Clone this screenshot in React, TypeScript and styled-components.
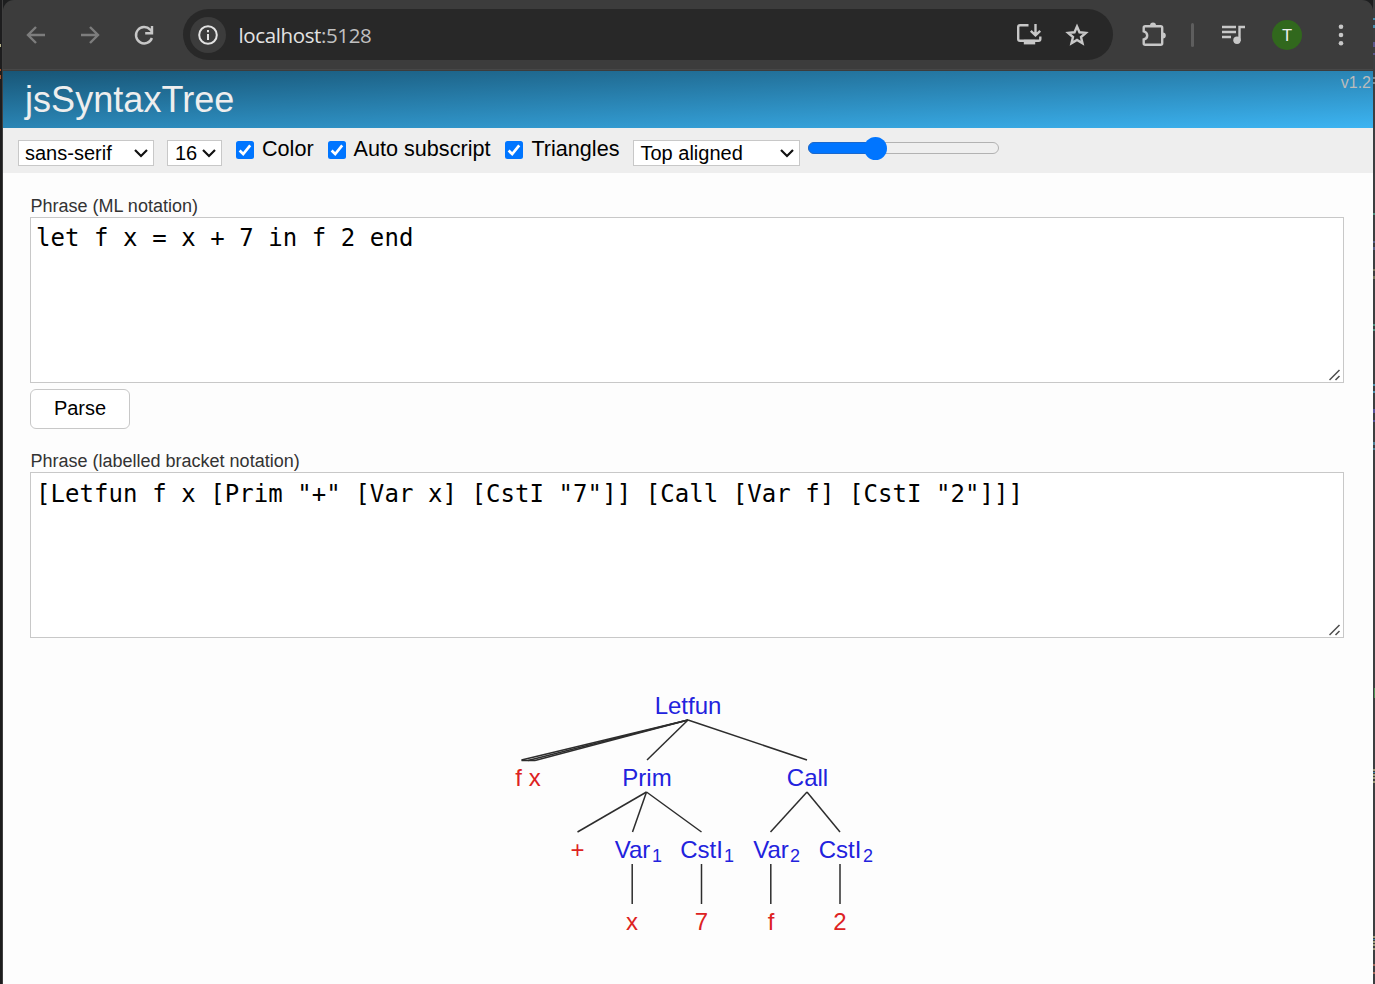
import React from 'react';
import styled, { createGlobalStyle } from 'styled-components';

const Global = createGlobalStyle`
  body { margin: 0; background: #1e1f21; overflow: hidden; }
  * { box-sizing: border-box; }
`;

const Desktop = styled.div`
  display: flex;
  height: 984px;
  width: 1375px;
  font-family: 'Liberation Sans', Arial, sans-serif;
  background: #1d1e1f;
`;

const LeftEdge = styled.div`
  width: 3px;
  border-right: 1px solid #3f3f3f;
  background:
    linear-gradient(#b9b58c, #b9b58c) 0 44px / 1px 3px no-repeat,
    linear-gradient(#a8532b, #a8532b) 0 69px / 1px 2px no-repeat,
    linear-gradient(#a8532b, #a8532b) 0 75px / 1px 4px no-repeat,
    #1d1d1e;
`;

const speck = (color: string, y: number, h: number) =>
  `linear-gradient(${color}, ${color}) 0 ${y}px / 2px ${h}px no-repeat`;

const RightEdge = styled.div`
  width: 2px;
  background: ${[
    speck('#4a8fae', 18, 2), speck('#4a8fae', 25, 3),
    speck('#5b578c', 42, 5), speck('#5b578c', 53, 2),
    speck('#85888a', 77, 2), speck('#85888a', 82, 2),
    speck('#4e9180', 213, 2), speck('#575f86', 241, 2), speck('#575f86', 247, 3),
    speck('#77755c', 269, 2), speck('#77755c', 276, 3),
    speck('#4e9180', 324, 2), speck('#4e9180', 329, 2),
    speck('#4c92ae', 384, 2), speck('#4c92ae', 391, 2),
    speck('#57539a', 409, 4), speck('#57539a', 420, 2),
    speck('#4b7f96', 442, 3), speck('#4b7f96', 448, 2),
    'linear-gradient(#4e9155, #4e9155) 1px 688px / 1px 10px no-repeat',
    speck('#9b9a78', 769, 2), speck('#3e85a4', 772, 1), speck('#9b9a78', 774, 2), speck('#9b9a78', 777, 2), speck('#9b9a78', 781, 2),
    speck('#9b9a78', 936, 2), speck('#3e85a4', 939, 1), speck('#9b9a78', 941, 2), speck('#9b9a78', 944, 2), speck('#9b9a78', 948, 2),
    speck('#a3685b', 964, 2), speck('#a3685b', 972, 2),
  ].join(', ')}, #3d3e40;
`;

const Browser = styled.div`
  width: 1370px;
  display: flex;
  flex-direction: column;
`;

const NavBar = styled.div`
  height: 71px;
  padding: 0 19px 2px 23px;
  display: flex;
  align-items: center;
  background: linear-gradient(#474747, #474747) 0 69px / 100% 1px no-repeat, #3c3c3c;
  border-radius: 11px 11px 0 0;
`;

const NavIcon = styled.svg<{ $gap?: number; $tone?: string }>`
  width: 26px;
  height: 26px;
  flex: none;
  margin-left: ${p => p.$gap ?? 0}px;
  fill: none;
  stroke: ${p => p.$tone ?? '#c7c7c7'};
  stroke-width: 2.4;
`;

const Omnibox = styled.div`
  width: 930px;
  height: 51px;
  margin-left: 26px;
  padding: 0 23px 0 7px;
  display: flex;
  align-items: center;
  border-radius: 26px;
  background: #282828;
`;

const SiteInfo = styled.span`
  width: 36px;
  height: 36px;
  border-radius: 50%;
  background: #3c3c3c;
  display: grid;
  place-items: center;
`;

const Url = styled.span`
  flex: 1;
  margin-left: 12.5px;
  font: 20.5px/28px 'Open Sans', 'Noto Sans', sans-serif;
  color: #e3e3e3;
  letter-spacing: -0.38px;
  span { color: #c0c0c0; }
`;

const Separator = styled.span`
  width: 3px;
  height: 24px;
  margin-left: 24px;
  border-radius: 2px;
  background: #5e5e5e;
`;

const Avatar = styled.span`
  width: 30px;
  height: 30px;
  margin-left: 26px;
  border-radius: 50%;
  background: #31681d;
  color: #f0f0f0;
  font: 17px/30px Roboto, sans-serif;
  text-align: center;
`;

const Header = styled.header`
  height: 57px;
  padding: 0 2px 0 22px;
  display: flex;
  justify-content: space-between;
  background: linear-gradient(to bottom right, #185677, #3cb4f2);
`;

const Title = styled.h1`
  margin: 0;
  font-size: 36px;
  font-weight: 400;
  line-height: 58px;
  letter-spacing: 0.05px;
  color: #eee;
`;

const Version = styled.span`
  font-size: 16px;
  line-height: 24px;
  color: #bbb;
`;

const Toolbar = styled.div`
  height: 45px;
  padding-left: 15px;
  display: flex;
  align-items: flex-start;
  background: #eee;
`;

const Select = styled.div<{ $width: number; $gap?: number; $pad?: number }>`
  width: ${p => p.$width}px;
  height: 26px;
  margin: 12px 0 0 ${p => p.$gap ?? 0}px;
  padding: 0 5px 0 ${p => p.$pad ?? 6}px;
  display: flex;
  align-items: center;
  justify-content: space-between;
  border: 1px solid #c8c8c8;
  background: #fff;
  color: #000;
  font-size: 20px;
  line-height: 24px;
  white-space: nowrap;
`;

const Check = styled.label<{ $gap: number }>`
  margin: 8px 0 0 ${p => p.$gap}px;
  display: flex;
  gap: 8px;
  font-size: 21.6px;
  line-height: 26px;
  color: #000;
  svg { margin-top: 5px; }
`;

const Slider = styled.div`
  position: relative;
  width: 191px;
  height: 12px;
  margin: 14px 0 0 8px;
  border: 1px solid #b2b2b2;
  border-radius: 6px;
  background: #efefef;
`;

const SliderFill = styled.div`
  width: 66px;
  height: 12px;
  margin: -1px;
  border: 1px solid #1a68cc;
  border-radius: 6px 0 0 6px;
  background: #0075ff;
`;

const SliderThumb = styled.div`
  position: absolute;
  left: 55px;
  top: -6.5px;
  width: 23px;
  height: 23px;
  border-radius: 50%;
  background: #0075ff;
`;

const Content = styled.main`
  flex: 1;
  padding: 22px 29px 0 27px;
  background: #fdfdfd;
`;

const Label = styled.label`
  display: block;
  height: 22px;
  padding-left: 0.5px;
  font-size: 18px;
  line-height: 22px;
  color: #333;
`;

const Phrase = styled.div<{ $top?: number }>`
  height: 166px;
  padding: ${p => p.$top ?? 5}px 5px 0;
  display: flex;
  flex-direction: column;
  justify-content: space-between;
  border: 1px solid #c8c8c8;
  background: #fff;
  color: #000;
  font: 24px/31px 'DejaVu Sans Mono', monospace;
  letter-spacing: 0.067px;
  white-space: pre;
`;

const Grip = styled.svg`
  align-self: flex-end;
  width: 12px;
  height: 12px;
  margin: 0 -3px 1px 0;
  stroke: #4c4c4c;
  stroke-width: 1.5;
`;

const ParseButton = styled.button`
  display: block;
  width: 100px;
  height: 40px;
  margin: 6px 0 21px;
  padding: 0 0 2px;
  border: 1px solid #c8c8c8;
  border-radius: 6px;
  background: #fff;
  color: #000;
  font: 20px 'Liberation Sans', Arial, sans-serif;
`;

const Tree = styled.svg`
  display: block;
  width: 400px;
  height: 260px;
  margin: 42px auto 0 470px;
  font: 24px 'Liberation Sans', Arial, sans-serif;
  text-anchor: middle;
`;

const Chevron = () => (
  <svg width="14" height="10" viewBox="0 0 14 10" fill="none" stroke="#111" strokeWidth="2.2">
    <path d="M1 2 L7 8 L13 2" />
  </svg>
);

const Tick = () => (
  <svg width="18" height="18" viewBox="0 0 18 18">
    <rect width="18" height="18" rx="2.5" fill="#0075ff" />
    <path d="M3.6 9.6 L7.2 13 L14.2 4.4" fill="none" stroke="#fff" strokeWidth="2.7" />
  </svg>
);

const ResizeGrip = () => (
  <Grip viewBox="0 0 12 12"><path d="M0.5 11 L10.5 1 M6.5 11 L10.5 7" /></Grip>
);

const edges: number[][] = [
  [188, 40, 21.5, 80], [188, 40, 28, 80.5], [188, 40, 35, 80.5], [21.5, 80.5, 35, 80.5],
  [188, 40, 147, 80], [188, 40, 307, 80],
  [146.5, 112, 77.5, 152], [146.5, 112, 132.5, 152], [146.5, 112, 201.5, 152],
  [307, 112, 270.5, 152], [307, 112, 340, 152],
  [132.2, 184, 132.2, 224], [201.5, 184, 201.5, 224],
  [270.8, 184, 270.8, 224], [340, 184, 340, 224],
];

type Node = { x: number; y: number; text: string; leaf?: boolean; sub?: [number, string] };
const nodes: Node[] = [
  { x: 188, y: 33.7, text: 'Letfun' },
  { x: 28, y: 105.7, text: 'f x', leaf: true },
  { x: 147, y: 105.7, text: 'Prim' },
  { x: 307.5, y: 105.7, text: 'Call' },
  { x: 77.5, y: 177.7, text: '+', leaf: true },
  { x: 132.5, y: 177.7, text: 'Var', sub: [157, '1'] },
  { x: 201.5, y: 177.7, text: 'CstI', sub: [229, '1'] },
  { x: 271, y: 177.7, text: 'Var', sub: [295, '2'] },
  { x: 340, y: 177.7, text: 'CstI', sub: [368, '2'] },
  { x: 132, y: 249.7, text: 'x', leaf: true },
  { x: 201.5, y: 249.7, text: '7', leaf: true },
  { x: 271, y: 249.7, text: 'f', leaf: true },
  { x: 340, y: 249.7, text: '2', leaf: true },
];

export default function App() {
  return (
    <Desktop>
      <Global />
      <LeftEdge />
      <Browser>
        <NavBar>
          <NavIcon viewBox="0 0 26 26" $gap={-3} $tone="#7d7d7d"><path d="M22 13 H5 M13 5 L5 13 L13 21" /></NavIcon>
          <NavIcon viewBox="0 0 26 26" $gap={28} $tone="#7d7d7d"><path d="M4 13 H21 M13 5 L21 13 L13 21" /></NavIcon>
          <NavIcon viewBox="0 0 26 26" $gap={28}>
            <path d="M20.9 16 A8.2 8.2 0 1 1 19.2 7.6 L21 9.8" />
            <path d="M21 4 V11.2 H14.2" />
          </NavIcon>
          <Omnibox>
            <SiteInfo>
              <svg width="20" height="20" viewBox="0 0 20 20" fill="none" stroke="#e3e3e3" strokeWidth="2">
                <circle cx="10" cy="10" r="8.8" /><path d="M10 9 V15 M10 5 V7.2" />
              </svg>
            </SiteInfo>
            <Url>localhost<span>:5128</span></Url>
            <NavIcon viewBox="0 0 26 26">
              <path d="M12.5 3.2 H4 Q2.2 3.2 2.2 5 V17 Q2.2 18.8 4 18.8 H22.5 Q24.3 18.8 24.3 17 V14.5 M19.5 2 V13 M14.8 8.8 L19.5 13.4 L24.2 8.8" />
              <path d="M9 19 H18 V21.2 H9 Z" />
            </NavIcon>
            <NavIcon viewBox="0 0 26 26" $gap={22}>
              <path d="M13 4.5 L15.5 10.3 L21.8 10.9 L17 15 L18.5 21.3 L13 18 L7.5 21.3 L9 15 L4.2 10.9 L10.5 10.3 Z" />
            </NavIcon>
          </Omnibox>
          <NavIcon viewBox="0.8 0.8 26 26" $gap={28}>
            <path d="M5 5 H20.5 Q22 5 22 6.5 V22 Q22 23.5 20.5 23.5 H5 Q3.5 23.5 3.5 22 V18.3 Q7 17.4 7 14.2 Q7 11 3.5 10.1 V6.5 Q3.5 5 5 5 Z" />
            <path d="M9.8 4.4 A3 3 0 0 1 15.8 4.4 Z M22.6 11.2 A3 3 0 0 1 22.6 17.2 Z" fill="#c7c7c7" stroke="none" />
          </NavIcon>
          <Separator />
          <NavIcon viewBox="0 0 26 26" $gap={26}>
            <path d="M2 5 H16 M2 10 H16 M2 15 H11 M19.5 19 V5 H25" />
            <circle cx="17" cy="18.2" r="3.7" fill="#c7c7c7" stroke="none" />
          </NavIcon>
          <Avatar>T</Avatar>
          <NavIcon viewBox="0 0 26 26" $gap={26}>
            <g fill="#c7c7c7" stroke="none">
              <circle cx="13" cy="4.7" r="2.3" /><circle cx="13" cy="13" r="2.3" /><circle cx="13" cy="21.3" r="2.3" />
            </g>
          </NavIcon>
        </NavBar>
        <Header>
          <Title>jsSyntaxTree</Title>
          <Version>v1.2</Version>
        </Header>
        <Toolbar>
          <Select $width={136}>sans-serif<Chevron /></Select>
          <Select $width={55} $gap={13} $pad={7}>16<Chevron /></Select>
          <Check $gap={14}><Tick />Color</Check>
          <Check $gap={14}><Tick />Auto subscript</Check>
          <Check $gap={15}><Tick />Triangles</Check>
          <Select $width={167} $gap={14}>Top aligned<Chevron /></Select>
          <Slider><SliderFill /><SliderThumb /></Slider>
        </Toolbar>
        <Content>
          <Label>Phrase (ML notation)</Label>
          <Phrase>let f x = x + 7 in f 2 end<ResizeGrip /></Phrase>
          <ParseButton>Parse</ParseButton>
          <Label>Phrase (labelled bracket notation)</Label>
          <Phrase $top={6}>{'[Letfun f x [Prim "+" [Var x] [CstI "7"]] [Call [Var f] [CstI "2"]]]'}<ResizeGrip /></Phrase>
          <Tree viewBox="0 0 400 260">
            {edges.map(([x1, y1, x2, y2], i) => (
              <line key={i} x1={x1} y1={y1} x2={x2} y2={y2} stroke="#2d2d2d" strokeWidth="1.5" />
            ))}
            {nodes.map((n, i) => (
              <g key={i} fill={n.leaf ? '#d22' : '#22d'}>
                <text x={n.x} y={n.y}>{n.text}</text>
                {n.sub && <text x={n.sub[0]} y={n.y + 4} fontSize="18">{n.sub[1]}</text>}
              </g>
            ))}
          </Tree>
        </Content>
      </Browser>
      <RightEdge />
    </Desktop>
  );
}
